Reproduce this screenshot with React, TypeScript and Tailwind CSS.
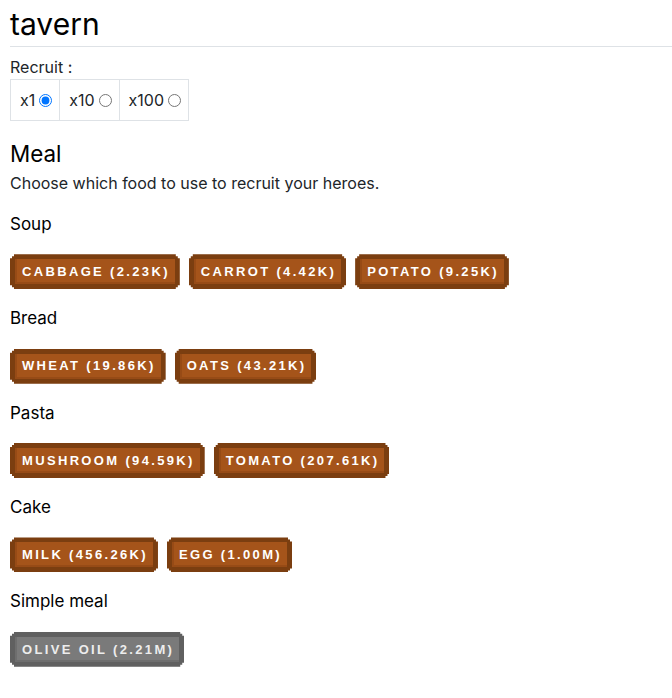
import React from "react";

const pixelClip =
  "[clip-path:polygon(4px_0,calc(100%_-_4px)_0,calc(100%_-_4px)_2px,calc(100%_-_2px)_2px,calc(100%_-_2px)_4px,100%_4px,100%_calc(100%_-_4px),calc(100%_-_2px)_calc(100%_-_4px),calc(100%_-_2px)_calc(100%_-_2px),calc(100%_-_4px)_calc(100%_-_2px),calc(100%_-_4px)_100%,4px_100%,4px_calc(100%_-_2px),2px_calc(100%_-_2px),2px_calc(100%_-_4px),0_calc(100%_-_4px),0_4px,2px_4px,2px_2px,4px_2px)]";

type Food = { name: string; amount: string };

const meals: { title: string; foods: Food[]; gray?: boolean }[] = [
  {
    title: "Soup",
    foods: [
      { name: "Cabbage", amount: "2.23K" },
      { name: "Carrot", amount: "4.42K" },
      { name: "Potato", amount: "9.25K" },
    ],
  },
  {
    title: "Bread",
    foods: [
      { name: "Wheat", amount: "19.86K" },
      { name: "Oats", amount: "43.21K" },
    ],
  },
  {
    title: "Pasta",
    foods: [
      { name: "Mushroom", amount: "94.59K" },
      { name: "Tomato", amount: "207.61K" },
    ],
  },
  {
    title: "Cake",
    foods: [
      { name: "Milk", amount: "456.26K" },
      { name: "Egg", amount: "1.00M" },
    ],
  },
  {
    title: "Simple meal",
    foods: [{ name: "Olive oil", amount: "2.21M" }],
    gray: true,
  },
];

const FoodButton = ({ food, gray }: { food: Food; gray?: boolean }) => (
  <button
    className={`${pixelClip} p-[5px] ${gray ? "bg-[#606060]" : "bg-[#7b3e10]"}`}
  >
    <span
      className={`flex h-[25px] items-center pl-[7px] pr-[5px] font-['Liberation_Sans',Arial,sans-serif] text-[13px] font-bold uppercase tracking-[0.18em] ${
        gray
          ? "bg-[#7a7a7a] text-[#ededed] shadow-[inset_2px_-2px_0_0_#6e6e6e]"
          : "bg-[#a5541a] text-white shadow-[inset_2px_-2px_0_0_#974b16]"
      }`}
    >
      {food.name} ({food.amount})
    </span>
  </button>
);

const RecruitOption = ({ label, checked }: { label: string; checked?: boolean }) => (
  <label className="flex h-[42px] items-center border border-[#dee2e6] -ml-px first:ml-0 pl-[9px] pr-[7px]">
    <span>{label}</span>
    <input type="radio" name="recruit" defaultChecked={checked} className="ml-[4px] h-[13px] w-[13px]" />
  </label>
);

export default function App() {
  return (
    <div className="pl-[10px] font-['Inter','Noto_Sans',sans-serif] text-[16px] text-[#212529]">
      <h1 className="border-b border-[#dee2e6] pt-[6px] pb-[4px] text-[30px] font-normal leading-[1.2] text-black">
        tavern
      </h1>
      <div className="mt-[8px] leading-[1.5]">Recruit :</div>
      <div className="flex w-fit">
        <RecruitOption label="x1" checked />
        <RecruitOption label="x10" />
        <RecruitOption label="x100" />
      </div>

      <h4 className="mt-[20px] text-[22.4px] font-normal leading-[1.2] text-black">Meal</h4>
      <p className="mt-[3px] leading-[1.5]">Choose which food to use to recruit your heroes.</p>

      {meals.map((meal) => (
        <div key={meal.title} className="mt-[19px] first-of-type:mt-[20px]">
          <div className="text-[17px] leading-[1.2] text-black">{meal.title}</div>
          <div className="mt-[20px] flex gap-[9px]">
            {meal.foods.map((food) => (
              <FoodButton key={food.name} food={food} gray={meal.gray} />
            ))}
          </div>
        </div>
      ))}
    </div>
  );
}
